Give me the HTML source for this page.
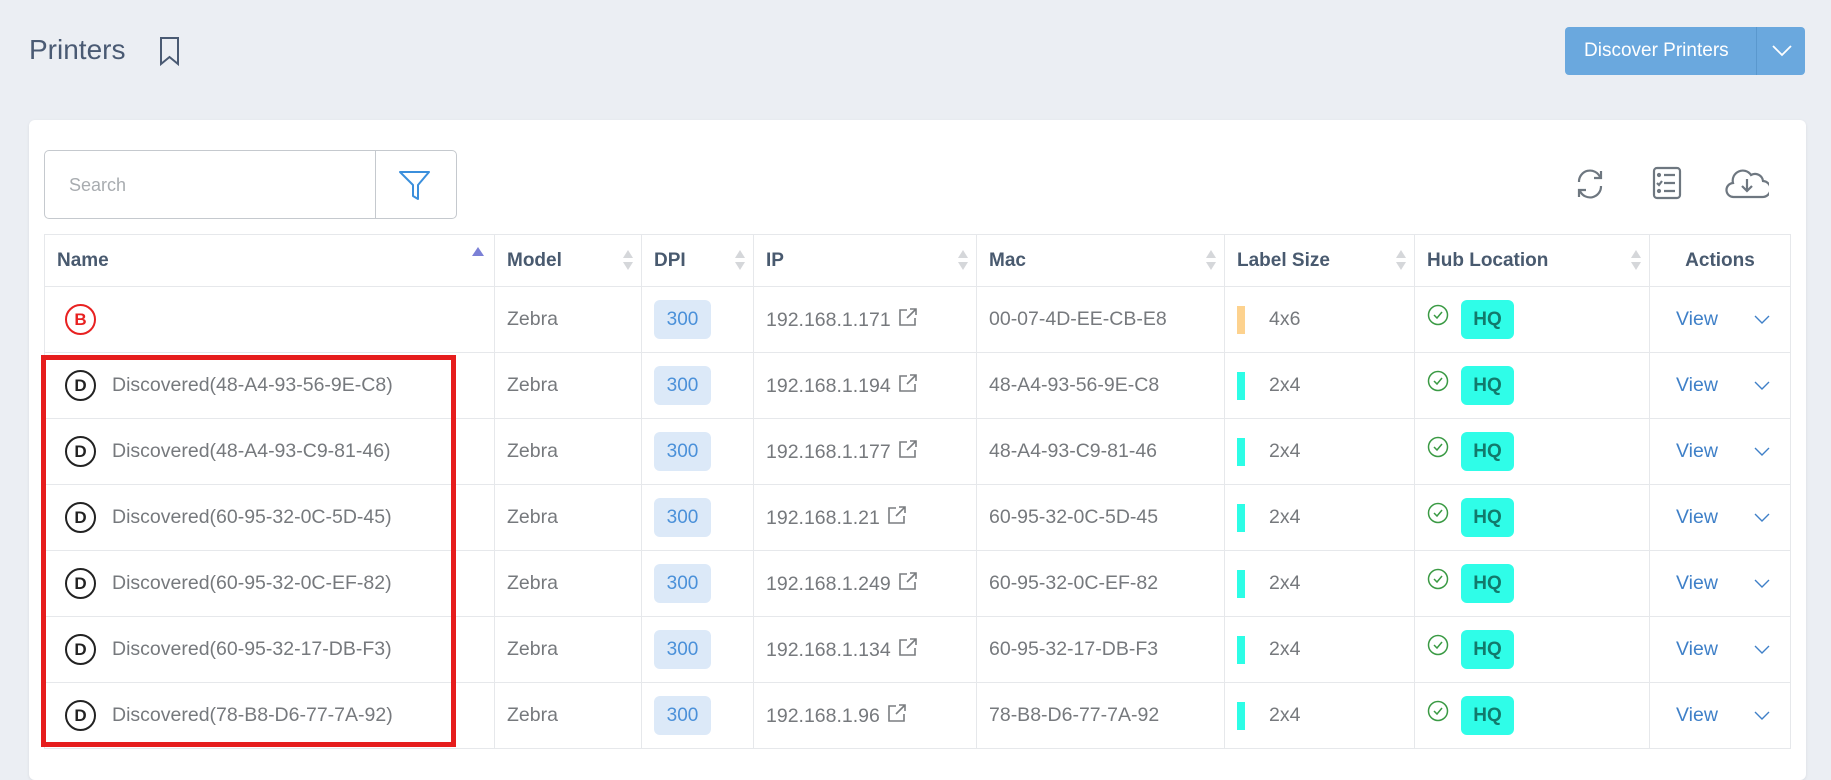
<!DOCTYPE html>
<html><head><meta charset="utf-8"><style>
*{box-sizing:border-box;margin:0;padding:0}
body{width:1831px;height:751px;overflow:hidden;background:#ebeef3;font-family:"Liberation Sans",sans-serif;position:relative}
.title{position:absolute;left:29px;top:34px;font-size:28px;color:#4a5a73}
.bm{position:absolute;left:158px;top:36px}
.btn{position:absolute;left:1565px;top:27px;width:240px;height:48px;background:#6aa8de;border-radius:4px;color:#fff;font-size:19px}
.btn span{position:absolute;left:19px;top:13px}
.btn i{position:absolute;left:191px;top:0;width:1px;height:48px;background:#5a98ce}
.card{position:absolute;left:29px;top:120px;width:1777px;height:660px;background:#fff;border-radius:6px;box-shadow:0 1px 3px rgba(0,0,0,.08)}
.search{position:absolute;left:44px;top:150px;width:413px;height:69px;border:1px solid #c5c9ce;border-radius:5px}
.search span{position:absolute;left:24px;top:24px;color:#a8acb0;font-size:18px}
.search i{position:absolute;left:330px;top:0;width:1px;height:67px;background:#c5c9ce}
.tool{position:absolute}
table{position:absolute;left:44px;top:234px;border-collapse:collapse;table-layout:fixed;width:1746px}
td,th{border:1px solid #e6e8eb;height:66px;font-size:19.5px;color:#76797d;padding:0 0 0 12px;position:relative;text-align:left;font-weight:normal;white-space:nowrap}
th{height:52px;color:#495a6f;font-weight:bold;font-size:19px}
th .s{position:absolute;right:8px;top:15px;width:10px;height:22px}
th .s:before{content:"";position:absolute;left:0;top:0;border:5px solid transparent;border-bottom:8px solid #d5d7da;border-top:0}
th .s:after{content:"";position:absolute;left:0;top:12px;border:5px solid transparent;border-top:8px solid #d5d7da;border-bottom:0}
th .up{position:absolute;right:10px;top:12px;border:6px solid transparent;border-bottom:9px solid #7b80d6;border-top:0}
.circ{display:inline-block;width:31px;height:31px;border-radius:50%;border:2px solid #222;text-align:center;line-height:27px;font-weight:bold;font-size:17px;color:#222;vertical-align:middle;margin-left:8px}
.circ.r{border-color:#e82121;color:#e82121}
.nm{margin-left:16px;vertical-align:middle}
.dpi{display:inline-block;width:57px;height:39px;background:#dce9f8;border-radius:6px;color:#4a90d9;text-align:center;line-height:39px;font-size:19px}
.bar{display:inline-block;width:8px;height:28px;background:#2dfde6;vertical-align:middle;margin-right:24px}
.hq{display:inline-block;width:53px;height:39px;background:#2ffde8;border-radius:6px;color:#127a6c;text-align:center;line-height:39px;font-size:19px;font-weight:bold;vertical-align:middle;margin-left:12px}
.view{color:#3f80c8;margin-left:14px}
.ext{vertical-align:-1px;margin-left:2px}
.red{position:absolute;left:41px;top:355px;width:415px;height:392px;border:5px solid #e61d1d}
</style></head><body>
<div class="title">Printers</div>
<svg class="bm" width="24" height="30" viewBox="0 0 24 30"><path d="M3 2h17v26l-8.5-7L3 28z" fill="none" stroke="#4a5a73" stroke-width="2"/></svg>
<div class="btn"><span>Discover Printers</span><i></i><svg style="position:absolute;left:207px;top:17px" width="20" height="14" viewBox="0 0 20 14"><path d="M1 2l9 9 9-9" fill="none" stroke="#fff" stroke-width="1.8"/></svg></div>
<div class="card"></div>
<div class="search"><span>Search</span><i></i><svg style="position:absolute;left:353px;top:19px" width="34" height="32" viewBox="0 0 34 32"><path d="M2 2h29L20 15v14l-5-3V15z" fill="none" stroke="#3b8fdc" stroke-width="2" stroke-linejoin="round"/></svg></div>
<svg class="tool" style="left:1574px;top:168px" width="32" height="32" viewBox="0 0 32 32" fill="none" stroke="#6e7780" stroke-width="2.2"><path d="M5 14A11 11 0 0 1 26 9"/><path d="M27 3v7h-7"/><path d="M27 18A11 11 0 0 1 6 23"/><path d="M5 29v-7h7"/></svg>
<svg class="tool" style="left:1652px;top:166px" width="30" height="34" viewBox="0 0 30 34" fill="none" stroke="#6e7780" stroke-width="2.2"><rect x="2" y="2" width="26" height="30" rx="3"/><path d="M12 9h11M12 17h11M12 25h11"/><circle cx="7" cy="9" r="1" fill="#6e7780"/><circle cx="7" cy="25" r="1" fill="#6e7780"/><path d="M5 17l2 2 3-4"/></svg>
<svg class="tool" style="left:1725px;top:166px" width="44" height="34" viewBox="0 0 44 34" fill="none" stroke="#6e7780" stroke-width="2.2"><path d="M11 31H9a7 7 0 0 1-1-14 10 10 0 0 1 18-8 8 8 0 0 1 12 6 8 8 0 0 1-1 16z"/><path d="M22 13v12M17 20l5 5 5-5"/></svg>
<table>
<colgroup><col style="width:450px"><col style="width:147px"><col style="width:112px"><col style="width:223px"><col style="width:248px"><col style="width:190px"><col style="width:235px"><col style="width:141px"></colgroup>
<tr><th>Name<span class="up"></span></th><th>Model<span class="s"></span></th><th>DPI<span class="s"></span></th><th>IP<span class="s"></span></th><th>Mac<span class="s"></span></th><th>Label Size<span class="s"></span></th><th>Hub Location<span class="s"></span></th><th style="text-align:center;padding:0">Actions</th></tr>
<tr><td><span class="circ r">B</span></td><td>Zebra</td><td><span class="dpi">300</span></td><td>192.168.1.171 <svg class="ext" width="20" height="20" viewBox="0 0 20 20" fill="none" stroke="#7a7d80" stroke-width="1.6"><path d="M9 3H2v15h15v-7M12 2h6v6M18 2l-9 9"/></svg></td><td>00-07-4D-EE-CB-E8</td><td><span class="bar" style="background:#fdd28e"></span>4x6</td><td><svg width="22" height="22" viewBox="0 0 22 22" style="vertical-align:middle;margin-top:-10px" fill="none" stroke="#3a9a44" stroke-width="1.5"><circle cx="11" cy="11" r="9.5"/><path d="M7 11l3 3 5-6"/></svg><span class="hq">HQ</span></td><td><span class="view">View</span><svg style="margin-left:36px" width="16" height="10" viewBox="0 0 16 10"><path d="M1 1l7 7 7-7" fill="none" stroke="#3f80c8" stroke-width="1.4"/></svg></td></tr>
<tr><td><span class="circ">D</span><span class="nm">Discovered(48-A4-93-56-9E-C8)</span></td><td>Zebra</td><td><span class="dpi">300</span></td><td>192.168.1.194 <svg class="ext" width="20" height="20" viewBox="0 0 20 20" fill="none" stroke="#7a7d80" stroke-width="1.6"><path d="M9 3H2v15h15v-7M12 2h6v6M18 2l-9 9"/></svg></td><td>48-A4-93-56-9E-C8</td><td><span class="bar"></span>2x4</td><td><svg width="22" height="22" viewBox="0 0 22 22" style="vertical-align:middle;margin-top:-10px" fill="none" stroke="#3a9a44" stroke-width="1.5"><circle cx="11" cy="11" r="9.5"/><path d="M7 11l3 3 5-6"/></svg><span class="hq">HQ</span></td><td><span class="view">View</span><svg style="margin-left:36px" width="16" height="10" viewBox="0 0 16 10"><path d="M1 1l7 7 7-7" fill="none" stroke="#3f80c8" stroke-width="1.4"/></svg></td></tr>
<tr><td><span class="circ">D</span><span class="nm">Discovered(48-A4-93-C9-81-46)</span></td><td>Zebra</td><td><span class="dpi">300</span></td><td>192.168.1.177 <svg class="ext" width="20" height="20" viewBox="0 0 20 20" fill="none" stroke="#7a7d80" stroke-width="1.6"><path d="M9 3H2v15h15v-7M12 2h6v6M18 2l-9 9"/></svg></td><td>48-A4-93-C9-81-46</td><td><span class="bar"></span>2x4</td><td><svg width="22" height="22" viewBox="0 0 22 22" style="vertical-align:middle;margin-top:-10px" fill="none" stroke="#3a9a44" stroke-width="1.5"><circle cx="11" cy="11" r="9.5"/><path d="M7 11l3 3 5-6"/></svg><span class="hq">HQ</span></td><td><span class="view">View</span><svg style="margin-left:36px" width="16" height="10" viewBox="0 0 16 10"><path d="M1 1l7 7 7-7" fill="none" stroke="#3f80c8" stroke-width="1.4"/></svg></td></tr>
<tr><td><span class="circ">D</span><span class="nm">Discovered(60-95-32-0C-5D-45)</span></td><td>Zebra</td><td><span class="dpi">300</span></td><td>192.168.1.21 <svg class="ext" width="20" height="20" viewBox="0 0 20 20" fill="none" stroke="#7a7d80" stroke-width="1.6"><path d="M9 3H2v15h15v-7M12 2h6v6M18 2l-9 9"/></svg></td><td>60-95-32-0C-5D-45</td><td><span class="bar"></span>2x4</td><td><svg width="22" height="22" viewBox="0 0 22 22" style="vertical-align:middle;margin-top:-10px" fill="none" stroke="#3a9a44" stroke-width="1.5"><circle cx="11" cy="11" r="9.5"/><path d="M7 11l3 3 5-6"/></svg><span class="hq">HQ</span></td><td><span class="view">View</span><svg style="margin-left:36px" width="16" height="10" viewBox="0 0 16 10"><path d="M1 1l7 7 7-7" fill="none" stroke="#3f80c8" stroke-width="1.4"/></svg></td></tr>
<tr><td><span class="circ">D</span><span class="nm">Discovered(60-95-32-0C-EF-82)</span></td><td>Zebra</td><td><span class="dpi">300</span></td><td>192.168.1.249 <svg class="ext" width="20" height="20" viewBox="0 0 20 20" fill="none" stroke="#7a7d80" stroke-width="1.6"><path d="M9 3H2v15h15v-7M12 2h6v6M18 2l-9 9"/></svg></td><td>60-95-32-0C-EF-82</td><td><span class="bar"></span>2x4</td><td><svg width="22" height="22" viewBox="0 0 22 22" style="vertical-align:middle;margin-top:-10px" fill="none" stroke="#3a9a44" stroke-width="1.5"><circle cx="11" cy="11" r="9.5"/><path d="M7 11l3 3 5-6"/></svg><span class="hq">HQ</span></td><td><span class="view">View</span><svg style="margin-left:36px" width="16" height="10" viewBox="0 0 16 10"><path d="M1 1l7 7 7-7" fill="none" stroke="#3f80c8" stroke-width="1.4"/></svg></td></tr>
<tr><td><span class="circ">D</span><span class="nm">Discovered(60-95-32-17-DB-F3)</span></td><td>Zebra</td><td><span class="dpi">300</span></td><td>192.168.1.134 <svg class="ext" width="20" height="20" viewBox="0 0 20 20" fill="none" stroke="#7a7d80" stroke-width="1.6"><path d="M9 3H2v15h15v-7M12 2h6v6M18 2l-9 9"/></svg></td><td>60-95-32-17-DB-F3</td><td><span class="bar"></span>2x4</td><td><svg width="22" height="22" viewBox="0 0 22 22" style="vertical-align:middle;margin-top:-10px" fill="none" stroke="#3a9a44" stroke-width="1.5"><circle cx="11" cy="11" r="9.5"/><path d="M7 11l3 3 5-6"/></svg><span class="hq">HQ</span></td><td><span class="view">View</span><svg style="margin-left:36px" width="16" height="10" viewBox="0 0 16 10"><path d="M1 1l7 7 7-7" fill="none" stroke="#3f80c8" stroke-width="1.4"/></svg></td></tr>
<tr><td><span class="circ">D</span><span class="nm">Discovered(78-B8-D6-77-7A-92)</span></td><td>Zebra</td><td><span class="dpi">300</span></td><td>192.168.1.96 <svg class="ext" width="20" height="20" viewBox="0 0 20 20" fill="none" stroke="#7a7d80" stroke-width="1.6"><path d="M9 3H2v15h15v-7M12 2h6v6M18 2l-9 9"/></svg></td><td>78-B8-D6-77-7A-92</td><td><span class="bar"></span>2x4</td><td><svg width="22" height="22" viewBox="0 0 22 22" style="vertical-align:middle;margin-top:-10px" fill="none" stroke="#3a9a44" stroke-width="1.5"><circle cx="11" cy="11" r="9.5"/><path d="M7 11l3 3 5-6"/></svg><span class="hq">HQ</span></td><td><span class="view">View</span><svg style="margin-left:36px" width="16" height="10" viewBox="0 0 16 10"><path d="M1 1l7 7 7-7" fill="none" stroke="#3f80c8" stroke-width="1.4"/></svg></td></tr>
</table>
<div class="red"></div>
</body></html>
